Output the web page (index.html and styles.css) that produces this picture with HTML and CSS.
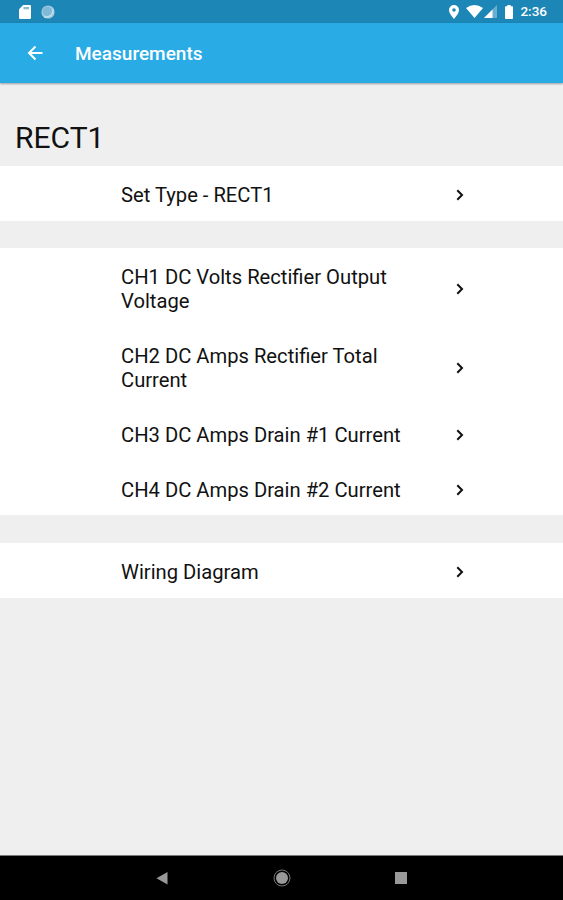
FILE: index.html
```html
<!DOCTYPE html>
<html lang="en">
<head>
    <meta charset="UTF-8">
    <meta name="viewport" content="width=device-width, initial-scale=1.0">
    <title>Measurements</title>
    <link rel="stylesheet" href="styles.css">
</head>
<body>
    <div class="status-bar">
        <div class="status-left">
            <svg width="12" height="14" viewBox="0 0 12 14"><path fill="#fff" d="M4.2 0H10.8Q12 0 12 1.2V12.8Q12 14 10.8 14H1.2Q0 14 0 12.8V4.2Z"/><path fill="#8fb9d0" d="M4.500 2H10V4.300H4.500Z"/></svg>
            <svg width="14" height="14" viewBox="0 0 14 14"><circle cx="7" cy="7" r="6.6" fill="#a3cde1"/><circle cx="6.2" cy="6.3" r="4.8" fill="#7fb9d5"/><path d="M3 12Q11.500 13 12.300 4" fill="none" stroke="#c4e0ec" stroke-width="1.300"/></svg>
        </div>
        <div class="status-right">
            <svg class="pin" width="10" height="14" viewBox="0 0 10 14"><path fill="#fff" fill-rule="evenodd" d="M5 0A5 5 0 0 0 0 5C0 8.600 5 14 5 14S10 8.600 10 5A5 5 0 0 0 5 0ZM5 3.200A1.800 1.800 0 1 1 5 6.800A1.800 1.800 0 1 1 5 3.200Z"/></svg>
            <svg class="wifi" width="17" height="13" viewBox="0 0 17 13"><path fill="#fff" d="M0 3Q8.500-3 17 3L8.500 13Z"/></svg>
            <svg class="signal" width="13" height="13" viewBox="0 0 13 13"><path fill="#6aafd0" d="M13 0V13H0Z"/><path fill="#fff" d="M8.500 4.500V13H0Z"/></svg>
            <svg class="battery" width="8" height="14" viewBox="0 0 8 14"><path fill="#fff" d="M2.300 0H5.700V1.300H7.200Q8 1.300 8 2.100V13.200Q8 14 7.200 14H.8Q0 14 0 13.200V2.100Q0 1.300 .8 1.300H2.300Z"/></svg>
            <span class="clock">2:36</span>
        </div>
    </div>

    <header class="app-bar">
        <svg width="16" height="16" viewBox="0 0 16 16"><path d="M15.500 8H2.500M8.500 1.500L2 8L8.500 14.500" fill="none" stroke="#fff" stroke-width="2"/></svg>
        <span class="title">Measurements</span>
    </header>

    <main>
        <h1>RECT1</h1>

        <div class="group">
            <div class="row"><span class="label">Set Type - RECT1</span><svg class="chevron" viewBox="0 0 8 12"><path d="M1.300 1.300L6 6L1.300 10.700"/></svg></div>
        </div>

        <div class="group">
            <div class="row"><span class="label">CH1 DC Volts Rectifier Output Voltage</span><svg class="chevron" viewBox="0 0 8 12"><path d="M1.300 1.300L6 6L1.300 10.700"/></svg></div>
            <div class="row"><span class="label">CH2 DC Amps Rectifier Total Current</span><svg class="chevron" viewBox="0 0 8 12"><path d="M1.300 1.300L6 6L1.300 10.700"/></svg></div>
            <div class="row"><span class="label">CH3 DC Amps Drain #1 Current</span><svg class="chevron" viewBox="0 0 8 12"><path d="M1.300 1.300L6 6L1.300 10.700"/></svg></div>
            <div class="row"><span class="label">CH4 DC Amps Drain #2 Current</span><svg class="chevron" viewBox="0 0 8 12"><path d="M1.300 1.300L6 6L1.300 10.700"/></svg></div>
        </div>

        <div class="group">
            <div class="row"><span class="label">Wiring Diagram</span><svg class="chevron" viewBox="0 0 8 12"><path d="M1.300 1.300L6 6L1.300 10.700"/></svg></div>
        </div>
    </main>

    <nav class="nav-bar">
        <svg width="18" height="18" viewBox="0 0 18 18"><path fill="#999" d="M14.500 3V15.500L3.500 9.200Z"/></svg>
        <svg width="18" height="18" viewBox="0 0 18 18"><circle cx="9" cy="9" r="6" fill="#999"/><circle cx="9" cy="9" r="8" fill="none" stroke="#777"/></svg>
        <svg width="18" height="18" viewBox="0 0 18 18"><path fill="#999" d="M3 3H15V15H3Z"/></svg>
    </nav>
</body>
</html>
```
FILE: styles.css
```css
* {
    box-sizing: border-box;
}

body {
    margin: 0;
    height: 900px;
    display: flex;
    flex-direction: column;
    font-family: Roboto, Arial, sans-serif;
    background: #efefef;
    color: #111;
    overflow: hidden;
}

svg {
    display: block;
    flex-shrink: 0;
}

/* Status bar */
.status-bar {
    height: 23px;
    padding: 0 15px 0 19px;
    display: flex;
    align-items: center;
    justify-content: space-between;
    background: #1c86b6;
}

.status-left,
.status-right {
    display: flex;
    align-items: center;
}

.status-left {
    gap: 10px;
}

.status-right {
    margin-right: 1px;
}

.wifi {
    margin-left: 7px;
}

.signal {
    margin-left: 1px;
}

.battery {
    margin-left: 8px;
}

.clock {
    margin-left: 7px;
    color: #fff;
    font-size: 13.5px;
    font-weight: 500;
    line-height: 23px;
}

/* App bar */
.app-bar {
    height: 60px;
    padding-left: 27px;
    display: flex;
    align-items: center;
    gap: 32px;
    background: #29abe5;
    box-shadow: 0 1px 2px rgba(0, 0, 0, 0.35);
}

.title {
    color: #fff;
    font-size: 19px;
    font-weight: 500;
}

/* Content */
main {
    flex: 1;
}

h1 {
    margin: 0;
    height: 83px;
    padding: 37px 15px 0;
    font-size: 30px;
    font-weight: 400;
    line-height: 36px;
}

.group {
    margin-bottom: 27.5px;
    background: #fff;
}

.row {
    display: flex;
    align-items: center;
    padding: 17px 99px 13.800px 121px;
}

.label {
    width: 290px;
    font-size: 20.2px;
    line-height: 24px;
}

.chevron {
    width: 8px;
    height: 12px;
    margin-left: auto;
}

.chevron path {
    fill: none;
    stroke: #111;
    stroke-width: 2;
}

/* Navigation bar */
.nav-bar {
    height: 45px;
    padding: 0 153px;
    display: flex;
    align-items: center;
    justify-content: space-between;
    background: #000;
    border-top: 1px solid #777;
}
```
